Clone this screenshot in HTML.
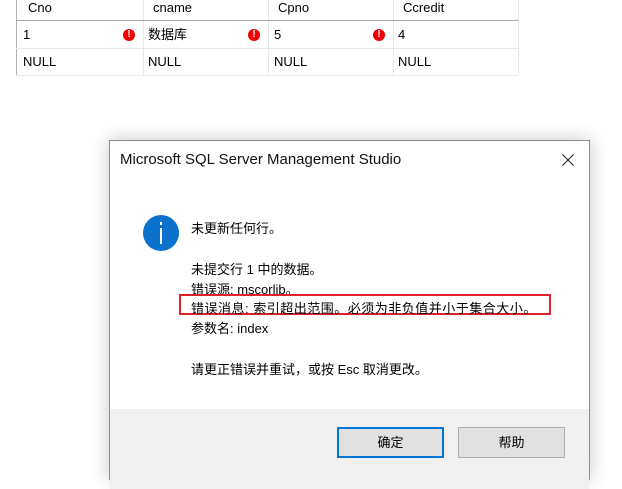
<!DOCTYPE html>
<html><head><meta charset="utf-8"><style>
*{margin:0;padding:0;box-sizing:border-box}
body{width:622px;height:469px;overflow:hidden;background:#fff;position:relative;font-family:"Liberation Sans","Noto Sans CJK SC",sans-serif;color:#000}
.t{position:absolute;white-space:nowrap}
.vl{position:absolute;top:0;width:1px;height:75px;background:#e8e8e8}
.hl{position:absolute;left:16px;width:502px;height:1px;background:#eaeaea}
.err{position:absolute;width:12px;height:12px;border-radius:50%;background:#e00;color:#fff;font:bold 10px/12px "Liberation Sans",sans-serif;text-align:center}
.g{font-size:13px;line-height:16px}
</style></head><body>
<div class="vl" style="left:16px;background:#b0b0b0"></div>
<div class="vl" style="left:143px"></div>
<div class="vl" style="left:268px"></div>
<div class="vl" style="left:393px"></div>
<div class="vl" style="left:518px"></div>
<div class="hl" style="top:20px;background:#a8a8a8"></div>
<div class="hl" style="top:48px"></div>
<div class="hl" style="top:75px"></div>
<div class="t g" style="left:28px;top:0px">Cno</div>
<div class="t g" style="left:153px;top:0px">cname</div>
<div class="t g" style="left:278px;top:0px">Cpno</div>
<div class="t g" style="left:403px;top:0px">Ccredit</div>
<div class="t g" style="left:23px;top:27px">1</div>
<div class="err" style="left:123px;top:29px">!</div>
<div class="t g" style="left:148px;top:27px">数据库</div>
<div class="err" style="left:248px;top:29px">!</div>
<div class="t g" style="left:274px;top:27px">5</div>
<div class="err" style="left:373px;top:29px">!</div>
<div class="t g" style="left:398px;top:27px">4</div>
<div class="t g" style="left:23px;top:54px">NULL</div>
<div class="t g" style="left:148px;top:54px">NULL</div>
<div class="t g" style="left:274px;top:54px">NULL</div>
<div class="t g" style="left:398px;top:54px">NULL</div>

<div style="position:absolute;left:109px;top:140px;width:481px;height:340px;background:#fff;border:1px solid #8c8c8c;box-shadow:0 0 18px rgba(0,0,0,0.22)">
 <div class="t" style="left:10px;top:10px;font-size:15px;color:#111">Microsoft SQL Server Management Studio</div>
 <svg style="position:absolute;left:452px;top:13px" width="12" height="12"><path d="M0.5 0.5L11.5 11.5M11.5 0.5L0.5 11.5" stroke="#222" stroke-width="1.1"/></svg>
 <div style="position:absolute;left:33px;top:74px;width:36px;height:36px;border-radius:50%;background:#0a71cc">
  <div style="position:absolute;left:17px;top:7px;width:2px;height:3px;background:#fff"></div>
  <div style="position:absolute;left:17px;top:13px;width:2px;height:16px;background:#fff"></div>
 </div>
 <div class="t" style="left:81px;top:77px;font-size:13px">未更新任何行。</div>
 <div class="t" style="left:81px;top:118px;font-size:13px">未提交行 1 中的数据。</div>
 <div class="t" style="left:81px;top:138px;font-size:13px">错误源: mscorlib。</div>
 <div style="position:absolute;left:69px;top:153px;width:372px;height:21px;border:2px solid #e0202a"></div>
 <div class="t" style="left:81px;top:157px;font-size:13px;letter-spacing:0.5px">错误消息: 索引超出范围。必须为非负值并小于集合大小。</div>
 <div class="t" style="left:81px;top:177px;font-size:13px">参数名: index</div>
 <div class="t" style="left:81px;top:218px;font-size:13px">请更正错误并重试，或按 Esc 取消更改。</div>
 <div style="position:absolute;left:0;top:268px;width:479px;height:80px;background:#f0f0f0">
  <div style="position:absolute;left:227px;top:18px;width:107px;height:31px;background:#e1e1e1;border:2px solid #0078d7;font-size:13px;text-align:center;line-height:27px">确定</div>
  <div style="position:absolute;left:348px;top:18px;width:107px;height:31px;background:#e1e1e1;border:1px solid #adadad;font-size:13px;text-align:center;line-height:29px">帮助</div>
 </div>
</div>
</body></html>
